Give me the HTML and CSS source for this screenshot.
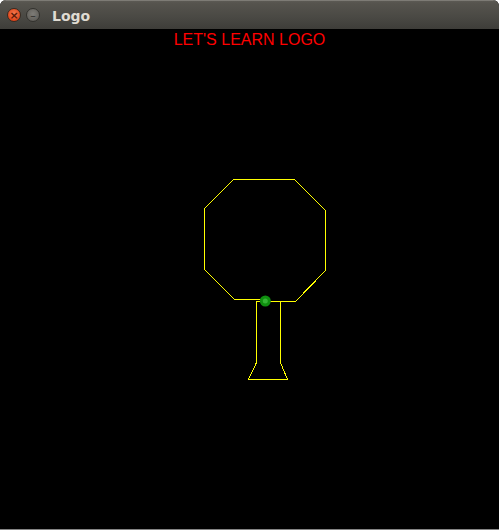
FILE: index.html
```html
<!DOCTYPE html>
<html>
<head>
<meta charset="utf-8">
<title>Logo</title>
<link rel="stylesheet" href="styles.css">
</head>
<body>
<div class="window">
  <div class="titlebar">
    <div class="buttons">
      <span class="btn close">×</span>
      <span class="btn minimize">–</span>
    </div>
    <span class="title">Logo</span>
  </div>
  <div class="canvas">
    <div class="heading">LET'S LEARN LOGO</div>
    <svg class="drawing" viewBox="0 29 499 500" width="499" height="500" shape-rendering="crispEdges">
      <g fill="none" stroke="#ffff00" stroke-width="1">
        <polyline points="265.5,299.5 234.5,299.5 204.5,269.5 204.5,208.5 233.5,179.5 294.5,179.5 325.5,210.5 325.5,270.5 295.5,301.5 255.5,301.5"/>
        <polyline points="256.5,301.5 256.5,362.5 248.5,379.5 287.5,379.5 280.5,362.5 280.5,301.5"/>
      </g>
      <circle cx="265.3" cy="301" r="5.5" fill="#0f8f0f" shape-rendering="auto"/>
      <circle cx="265.3" cy="301" r="2.5" fill="#35b535" shape-rendering="auto"/>
    </svg>
  </div>
</div>
</body>
</html>
```
FILE: styles.css
```css
html, body {
  margin: 0;
  padding: 0;
  background: #ffffff;
}
.window {
  width: 499px;
  height: 530px;
  display: flex;
  flex-direction: column;
  border-radius: 6px 6px 0 0;
  overflow: hidden;
  background: #000;
}
.titlebar {
  height: 29px;
  flex: 0 0 29px;
  box-sizing: border-box;
  display: flex;
  align-items: center;
  padding: 0 0 0 7px;
  background: linear-gradient(#5c5a54 0px, #56544e 2px, #4a4944 16px, #3d3c38 29px);
  border-top: 1px solid #7d7b75;
}
.buttons {
  display: flex;
  gap: 5px;
  margin-right: 12px;
}
.btn {
  width: 14px;
  height: 14px;
  border-radius: 50%;
  display: flex;
  align-items: center;
  justify-content: center;
  font-family: "DejaVu Sans", sans-serif;
  font-size: 11px;
  line-height: 1;
  box-sizing: border-box;
}
.close {
  background: radial-gradient(circle at 50% 40%, #f47a4e, #e0461c 70%, #b8360f);
  color: #5a1a08;
  border: 1px solid #3a2a20;
  font-weight: bold;
}
.minimize {
  background: radial-gradient(circle at 50% 40%, #7e7c77, #63615c 70%, #4c4a46);
  color: #2e2d2a;
  border: 1px solid #33322e;
}
.title {
  font-family: "DejaVu Sans", "Liberation Sans", sans-serif;
  font-weight: bold;
  font-size: 14px;
  color: #dfdbd2;
  margin-top: 1px;
}
.canvas {
  position: relative;
  flex: 1;
  background: #000;
  border-bottom: 1px solid #858585;
}
.heading {
  text-align: center;
  font-family: "Liberation Sans", Arial, sans-serif;
  font-size: 16px;
  color: #ff0000;
  padding-top: 2px;
  line-height: 18px;
  position: relative;
  z-index: 1;
}
.drawing {
  position: absolute;
  left: 0;
  top: 0;
  display: block;
}
```
